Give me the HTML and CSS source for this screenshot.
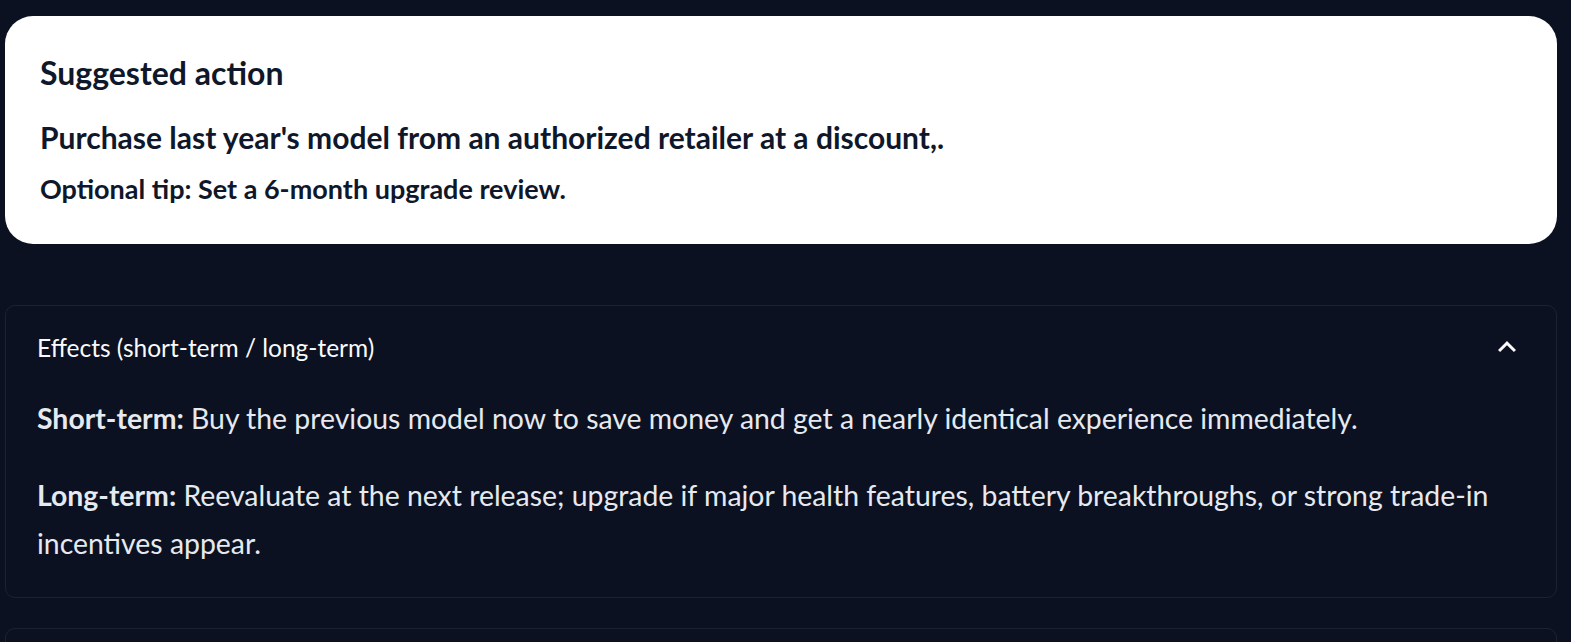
FILE: index.html
```html
<!DOCTYPE html>
<html lang="en">
<head>
  <meta charset="UTF-8">
  <title>Suggested action</title>
  <link rel="stylesheet" href="styles.css">
</head>
<body>

<main class="page">

  <!-- 建議動作卡片 -->
  <section class="action-card">
    <h3>Suggested action</h3>
    <p class="action-main">Purchase last year's model from an authorized retailer at a discount,.</p>
    <p class="action-tip">Optional tip: Set a 6-month upgrade review.</p>
  </section>

  <!-- 效果說明 -->
  <details class="expander" open>
    <summary>
      <span>Effects (short-term / long-term)</span>
      <svg class="chevron" viewBox="0 0 24 24" width="36" height="36">
        <path d="M12 8l-6 6 1.41 1.41L12 10.83l4.59 4.58L18 14z" fill="currentColor"/>
      </svg>
    </summary>
    <div class="expander-body">
      <p><strong>Short-term:</strong> Buy the previous model now to save money and get a nearly identical experience immediately.</p>
      <p><strong>Long-term:</strong> Reevaluate at the next release; upgrade if major health features, battery breakthroughs, or strong trade-in incentives appear.</p>
    </div>
  </details>

  <!-- 下一個區塊（畫面外） -->
  <div class="expander expander-next"></div>

</main>

</body>
</html>
```

FILE: styles.css
```css
body {
  background-color: #0b1120;
  font-family: "Lato", sans-serif;
  color: #e6e9ef;
  margin: 0;
  padding: 0;
  overflow: hidden;
}

.page {
  padding: 16px 14px 0 5px;
}

.action-card {
  background-color: #fff;
  color: #0f172a;
  border-radius: 28px;
  padding: 36px 35px 37px;
}

.action-card h3 {
  font-size: 32px;
  line-height: 42px;
  font-weight: bold;
  margin: 0;
}

.action-main {
  font-size: 30px;
  line-height: 40px;
  font-weight: bold;
  margin: 23px 0 0;
}

.action-tip {
  font-size: 27px;
  line-height: 36px;
  font-weight: bold;
  margin: 14px 0 0;
}

.expander {
  border: 1px solid #1b2231;
  border-radius: 10px;
  margin-top: 61px;
}

.expander-next {
  margin-top: 30px;
  height: 80px;
}

.expander summary {
  list-style: none;
  display: flex;
  justify-content: space-between;
  align-items: flex-start;
  padding: 26px 31px 0;
  font-size: 24.5px;
  line-height: 32px;
  color: #fafafa;
}

.expander summary::-webkit-details-marker {
  display: none;
}

.chevron {
  margin-top: -3px;
  color: #fafafa;
}

.expander-body {
  padding: 0 31px 30px;
}

.expander-body p {
  font-size: 28.4px;
  line-height: 48px;
  margin: 29px 0 0;
}

.expander-body strong {
  font-weight: bold;
}
```
